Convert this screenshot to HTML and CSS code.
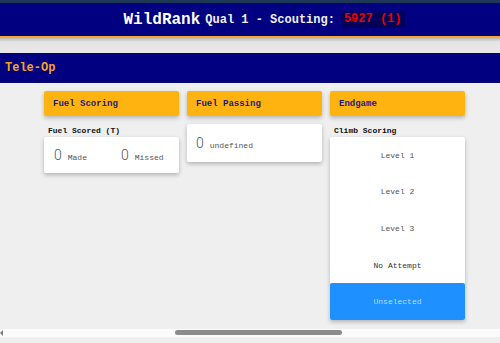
FILE: index.html
```html
<!DOCTYPE html>
<html>
<head>
<meta charset="utf-8">
<link rel="stylesheet" href="styles.css">
</head>
<body>
<div class="page">
  <header class="header">
    <span class="title">WildRank</span>
    <span class="subtitle">Qual 1 - Scouting:</span>
    <span class="team">5927 (1)</span>
  </header>
  <div class="header-gap"></div>
  <div class="phase-bar">Tele-Op</div>
  <main class="content">
    <section class="column">
      <div class="col-head">Fuel Scoring</div>
      <div class="label">Fuel Scored (T)</div>
      <div class="card counters">
        <div class="counter first"><span class="num">0</span><span class="cname">Made</span></div>
        <div class="counter"><span class="num">0</span><span class="cname">Missed</span></div>
      </div>
    </section>
    <section class="column">
      <div class="col-head">Fuel Passing</div>
      <div class="card counters single">
        <div class="counter"><span class="num">0</span><span class="cname">undefined</span></div>
      </div>
    </section>
    <section class="column">
      <div class="col-head">Endgame</div>
      <div class="label">Climb Scoring</div>
      <div class="card options">
        <div class="option">Level 1</div>
        <div class="option">Level 2</div>
        <div class="option">Level 3</div>
        <div class="option dark">No Attempt</div>
        <div class="option selected">Unselected</div>
      </div>
    </section>
  </main>
  <div class="scrollbar">
    <span class="arrow"></span>
    <div class="thumb"></div>
  </div>
  <div class="bottom"></div>
</div>
</body>
</html>
```

FILE: styles.css
```css
html, body {
  margin: 0;
  padding: 0;
}
body {
  background: #efefef;
  font-family: "Liberation Mono", "Courier New", monospace;
}
.page {
  width: 500px;
  height: 343px;
  display: flex;
  flex-direction: column;
  overflow: hidden;
}
.header {
  height: 33px;
  border-top: 3px solid #1d3756;
  border-bottom: 2px solid #f2a828;
  background: #000080;
  display: flex;
  align-items: center;
  justify-content: center;
  padding-left: 28px;
  box-sizing: content-box;
  color: #fff;
  font-weight: bold;
}
.title {
  font-size: 16px;
  margin-right: 5px;
}
.subtitle {
  font-size: 12px;
  color: #f0f0f0;
  margin-right: 6px;
}
.team {
  font-size: 12px;
  color: #e80000;
  background: #00005a;
  padding: 2px 3px;
  line-height: 13px;
}
.header-gap {
  height: 15px;
  background: linear-gradient(#b9b9b9, #e4e4e4 4px, #e9e9e9);
}
.phase-bar {
  height: 29px;
  background: #000080;
  color: #f5a31e;
  font-size: 12px;
  font-weight: bold;
  display: flex;
  align-items: center;
  padding-left: 5px;
  border-bottom: 1px solid #0c0c6a;
}
.content {
  flex: 1;
  display: flex;
  gap: 8px;
  padding: 8px 0 0 44px;
  align-items: flex-start;
}
.column {
  width: 135px;
  display: flex;
  flex-direction: column;
}
.col-head {
  height: 25px;
  background: #ffb311;
  border-radius: 2px;
  box-shadow: 0 2px 4px rgba(0,0,0,0.25);
  color: #1b1b7a;
  font-size: 9px;
  font-weight: bold;
  display: flex;
  align-items: center;
  padding-left: 9px;
  margin-bottom: 8px;
}
.label {
  height: 13px;
  font-size: 8px;
  font-weight: bold;
  color: #111;
  padding-left: 4px;
  display: flex;
  align-items: center;
}
.card {
  background: #fff;
  border-radius: 2px;
  box-shadow: 0 2px 4px rgba(0,0,0,0.25);
}
.counters {
  height: 36px;
  display: flex;
  align-items: center;
  padding-left: 10px;
}
.counters.single {
  height: 38px;
  padding-left: 9px;
}
.counter {
  display: flex;
  align-items: baseline;
}
.counter.first {
  width: 67px;
}
.num {
  font-family: Roboto, "Liberation Sans", sans-serif;
  font-weight: 300;
  font-size: 14px;
  color: #555;
  margin-right: 6px;
}
.cname {
  font-size: 8px;
  color: #555;
}
.options {
  display: flex;
  flex-direction: column;
}
.option {
  height: 36.6px;
  display: flex;
  align-items: center;
  justify-content: center;
  font-size: 8px;
  color: #555;
}
.option.dark {
  color: #333;
}
.option.selected {
  background: #1e90ff;
  color: #b6dcff;
  border-radius: 2px;
}
.scrollbar {
  height: 8px;
  background: #fbfbfb;
  position: relative;
  flex: none;
}
.arrow {
  position: absolute;
  left: 0;
  top: 1px;
  width: 0;
  height: 0;
  border-top: 3px solid transparent;
  border-bottom: 3px solid transparent;
  border-right: 3px solid #7a7a7a;
}
.thumb {
  margin-left: 175px;
  margin-top: 1px;
  width: 167px;
  height: 5px;
  border-radius: 3px;
  background: #8c8c8c;
}
.bottom {
  height: 6px;
  background: #efefef;
  flex: none;
}
```
